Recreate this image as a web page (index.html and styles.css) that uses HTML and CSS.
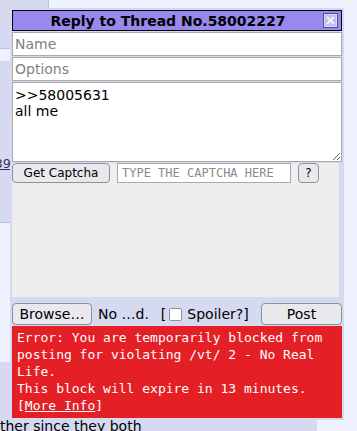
FILE: index.html
```html
<!DOCTYPE html>
<html lang="en">
<head>
    <meta charset="UTF-8">
    <meta name="viewport" content="width=device-width, initial-scale=1.0">
    <title>Quick Reply</title>
    <link rel="stylesheet" href="styles.css">
</head>
<body>
    <div class="thread">
        <div class="post post-top"></div>
        <div class="post post-mid">
            <a href="#" class="quotelink">&gt;&gt;58002239</a>
        </div>
        <div class="post post-low">
            <span class="post-text">ther since they both</span>
        </div>
    </div>

    <div id="quickReply" class="qr">
        <div class="qr-header">
            <span class="qr-title">Reply to Thread No.58002227</span>
            <a href="#" class="qr-close" title="Close">
                <svg width="15" height="15" viewBox="0 0 15 15">
                    <rect x="0.5" y="0.5" width="14" height="14" fill="#b9c1ec" stroke="#4b4f96"/>
                    <rect x="1.5" y="1.5" width="12" height="12" fill="none" stroke="#d7dcf7"/>
                    <path d="M4 4 L11 11 M11 4 L4 11" stroke="#f4f5fd" stroke-width="2"/>
                </svg>
            </a>
        </div>
        <form class="qr-form">
            <input type="text" class="field" placeholder="Name">
            <input type="text" class="field" placeholder="Options">
            <textarea class="field comment">&gt;&gt;58005631
all me</textarea>
            <div class="captcha">
                <div class="captcha-row">
                    <button type="button" class="btn btn-captcha">Get Captcha</button>
                    <input type="text" class="captcha-input" placeholder="TYPE THE CAPTCHA HERE">
                    <button type="button" class="btn btn-help">?</button>
                </div>
            </div>
            <div class="qr-footer">
                <button type="button" class="btn btn-browse">Browse…</button>
                <span class="file-name">No …d.</span>
                <label class="spoiler">[<input type="checkbox" class="check">Spoiler?]</label>
                <button type="submit" class="btn btn-post">Post</button>
            </div>
        </form>
        <div class="qr-error">Error: You are temporarily blocked from posting for violating /vt/ 2 - No Real Life.<br>This block will expire in 13 minutes.<br>[<a href="#">More Info</a>]</div>
    </div>
</body>
</html>
```

FILE: styles.css
```css
body {
    margin: 0;
    background-color: #eef2ff;
    font-family: "DejaVu Sans", sans-serif;
    font-size: 14px;
    color: #000;
    height: 431px;
    overflow: hidden;
}
.thread {
    display: flex;
    flex-direction: column;
}
.post {
    background-color: #d6daf0;
    box-sizing: border-box;
}
.post-top {
    width: 49px;
    height: 49px;
    border-right: 1px solid #b7c5d9;
    border-bottom: 1px solid #b7c5d9;
}
.post-mid {
    width: 300px;
    height: 162px;
    margin-top: 12px;
    padding-top: 95px;
    border-bottom: 1px solid #b7c5d9;
    font-size: 13px;
}
.quotelink {
    display: block;
    text-indent: -77px;
    color: #34345c;
}
.post-low {
    width: 317px;
    height: 80px;
    margin-top: 139px;
    padding-top: 56px;
}
.post-text {
    white-space: nowrap;
}

.qr {
    position: absolute;
    left: 10px;
    top: 8px;
    width: 330px;
    padding: 2px;
    background-color: #d6daf0;
}
.qr-header {
    display: flex;
    align-items: center;
    height: 21px;
    box-sizing: border-box;
    background-color: #9988ee;
    border: 1px solid #000;
}
.qr-title {
    flex: 1;
    text-align: center;
    font-weight: bold;
    font-size: 14px;
}
.qr-close {
    display: flex;
    margin-right: 3px;
}
.qr-form {
    display: flex;
    flex-direction: column;
    margin: 0;
}
.field {
    box-sizing: border-box;
    width: 100%;
    margin: 1px 0 0;
    border: 1px solid #aaa;
    font-family: "DejaVu Sans", sans-serif;
    font-size: 14px;
    padding: 0 2px;
    height: 24px;
    background: #fff;
}
.field::placeholder {
    color: #808080;
}
.comment {
    height: 80px;
    padding: 4px 2px;
    resize: vertical;
    line-height: 16px;
}
.captcha {
    width: 327px;
    height: 134px;
    margin-top: 1px;
    background-color: #eee;
}
.captcha-row {
    display: flex;
    gap: 7px;
}
.btn {
    font-family: "DejaVu Sans", sans-serif;
    background-color: #e9e9ed;
    border: 1px solid #8f8f9d;
    border-radius: 4px;
    color: #000;
    padding: 0;
    cursor: pointer;
}
.btn-captcha {
    width: 98px;
    height: 20px;
    font-size: 12px;
}
.captcha-input {
    box-sizing: border-box;
    width: 174px;
    height: 20px;
    border: 1px solid #aaa;
    padding: 0 4px;
    font-family: "DejaVu Sans Mono", monospace;
    font-size: 12px;
    background: #fff;
}
.captcha-input::placeholder {
    color: #8a8a8a;
}
.btn-help {
    width: 21px;
    height: 20px;
    font-size: 12px;
}
.qr-footer {
    display: flex;
    align-items: center;
    margin-top: 6px;
    height: 22px;
}
.btn-browse {
    width: 80px;
    height: 22px;
    font-size: 14px;
}
.file-name {
    margin-left: 6px;
}
.spoiler {
    display: flex;
    align-items: center;
    margin-left: 12px;
}
.check {
    appearance: none;
    width: 13px;
    height: 13px;
    margin: 0 5px 0 3px;
    border: 1px solid #8f8f9d;
    border-radius: 2px;
    background: #fff;
}
.btn-post {
    margin-left: auto;
    width: 81px;
    height: 22px;
    font-size: 14px;
}
.qr-error {
    margin-top: 1px;
    padding: 3px 5px 4px;
    background-color: #e41f25;
    color: #fff;
    font-family: "DejaVu Sans Mono", monospace;
    font-size: 13px;
    line-height: 17px;
}
.qr-error a {
    color: #fff;
}
```
